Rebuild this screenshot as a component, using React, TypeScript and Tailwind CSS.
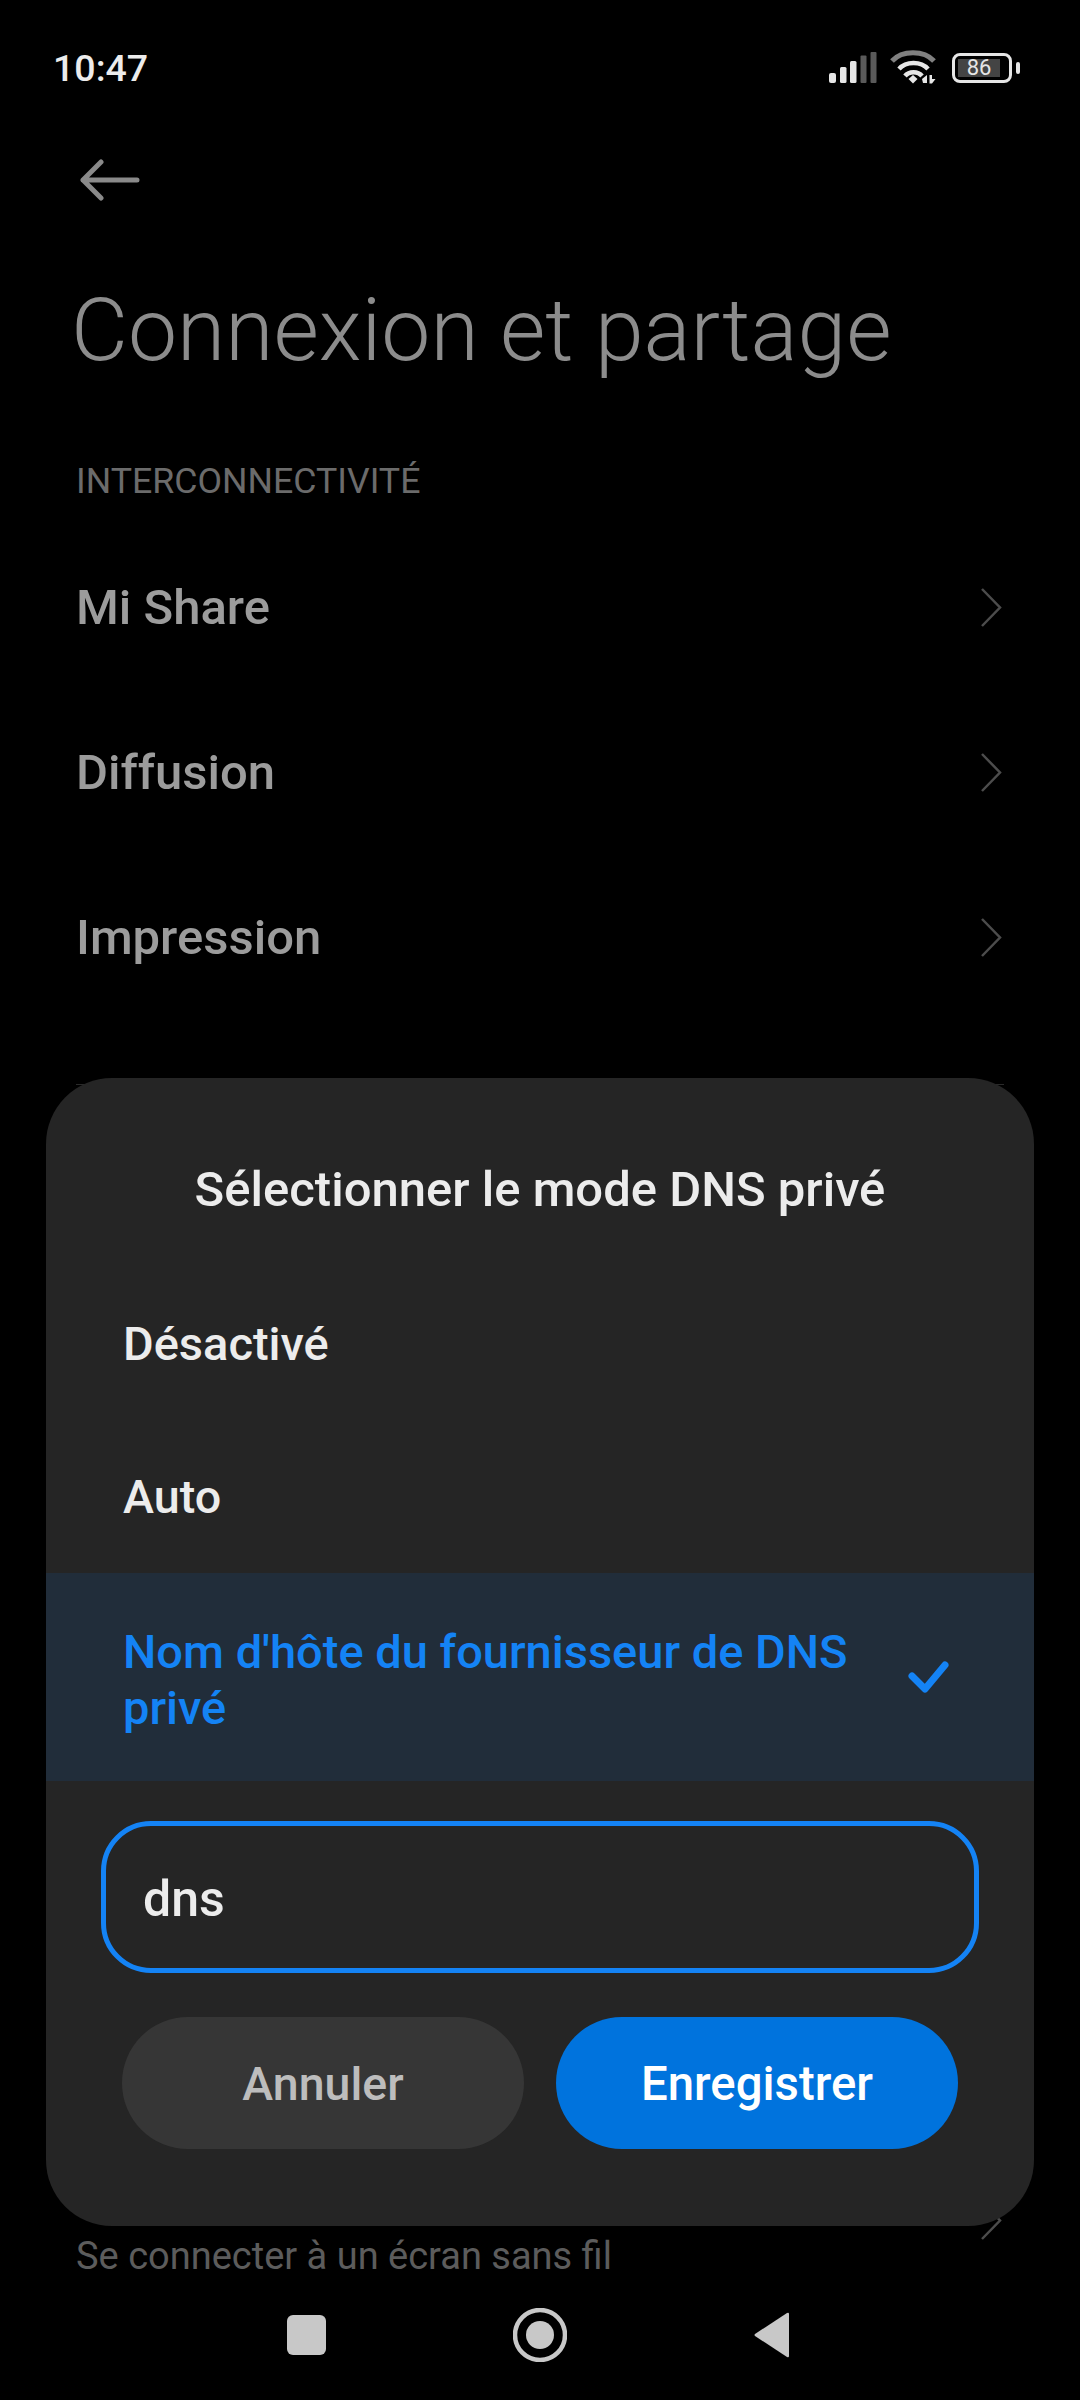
const font = "font-['Roboto',sans-serif]";

function SignalIcon() {
  return (
    <svg width="50" height="32" viewBox="0 0 50 32">
      <rect x="0" y="21" width="7" height="10" rx="2" fill="#e6e6e6" />
      <rect x="11" y="15" width="6.5" height="16" rx="1.5" fill="#e6e6e6" />
      <rect x="21" y="9" width="6.5" height="22" rx="1.5" fill="#e6e6e6" />
      <rect x="31.5" y="3.5" width="6" height="27.5" rx="1" fill="#5a5a5a" />
      <rect x="41.5" y="0" width="6" height="31" rx="1" fill="#5a5a5a" />
    </svg>
  );
}

function WifiIcon() {
  return (
    <svg width="48" height="36" viewBox="0 0 48 36" fill="none">
      <path d="M2 11 C12 0 34 0 44 11" stroke="#808080" strokeWidth="5" />
      <path d="M9 19 C16 11 31 11 38 19" stroke="#e6e6e6" strokeWidth="4.5" />
      <path d="M15 26 C19 21 28 21 32 26" stroke="#e6e6e6" strokeWidth="4.5" />
      <path d="M18.5 29 L23 25 L27.5 29 L23 33.5 Z" fill="#e6e6e6" />
      <path d="M32 29 L37 25 V33 H33 Z M39.5 25 H42 V29 H45.5 L42 33.5 H39.5 Z" fill="#e6e6e6" />
    </svg>
  );
}

function Battery() {
  return (
    <div className="flex items-center gap-[4px]">
      <div className="w-[60px] h-[30px] rounded-[8px] border-[3px] border-[#e6e6e6] p-[3px] flex">
        <div className={`w-[42px] h-full bg-[#444444] flex items-center justify-center text-[22px] leading-none text-[#e6e6e6] ${font}`}>
          86
        </div>
      </div>
      <div className="w-[4px] h-[12px] rounded-[2px] bg-[#e6e6e6]" />
    </div>
  );
}

function Chevron() {
  return (
    <svg width="22" height="42" viewBox="0 0 22 42" fill="none">
      <path d="M1 2 L19 20.5 L1 39" stroke="#4c4c4c" strokeWidth="2.5" />
    </svg>
  );
}

function SettingRow({ label }: { label: string }) {
  return (
    <div className="h-[165px] pl-[76px] pr-[77px] flex items-center justify-between">
      <span className="text-[49px] font-medium text-[#9c9c9c]">{label}</span>
      <Chevron />
    </div>
  );
}

function DnsDialog() {
  return (
    <div className="absolute left-[46px] top-[1078px] w-[988px] h-[1148px] rounded-[66px] bg-[#252525] flex flex-col">
      <div className="h-[200px] pt-[78px] text-center text-[49px] leading-[68px] font-medium text-[#ececec]">
        Sélectionner le mode DNS privé
      </div>
      <div className="h-[132px] pl-[77px] flex items-center text-[47px] font-medium text-[#ececec]">Désactivé</div>
      <div className="h-[163px] pt-[12px] pl-[77px] flex items-center text-[46.7px] font-medium text-[#ececec]">Auto</div>
      <div className="h-[208px] pl-[77px] pr-[85px] bg-[#212d3a] flex items-center justify-between">
        <span className="w-[760px] pt-[5px] text-[47px] leading-[56px] font-medium text-[#1483f5]">
          Nom d'hôte du fournisseur de DNS privé
        </span>
        <svg width="42" height="34" viewBox="0 0 42 34" fill="none">
          <path d="M5 16 L18 29 L38 5" stroke="#1483f5" strokeWidth="7" strokeLinecap="round" strokeLinejoin="round" />
        </svg>
      </div>
      <div className="mt-[40px] mx-[55px] h-[152px] rounded-[50px] border-[5px] border-[#1483f5] pl-[37px] pt-[4px] flex items-center text-[50px] font-medium text-[#ececec]">
        dns
      </div>
      <div className="mt-[44px] mx-[76px] flex gap-[32px]">
        <div className="flex-1 h-[132px] pt-[4px] rounded-[66px] bg-[#363636] flex items-center justify-center text-[46.5px] font-medium text-[#bdbdbd]">
          Annuler
        </div>
        <div className="flex-1 h-[132px] pt-[3px] rounded-[66px] bg-[#0073dd] flex items-center justify-center text-[47.3px] font-medium text-white">
          Enregistrer
        </div>
      </div>
    </div>
  );
}

export default function App() {
  return (
    <div className={`relative w-[1080px] h-[2400px] bg-black overflow-hidden flex flex-col ${font}`}>
      {/* Status bar */}
      <div className="h-[134px] pl-[53px] pr-[60px] pt-[2px] flex items-center justify-between">
        <span className="text-[37.5px] font-medium text-[#ececec]">10:47</span>
        <div className="flex items-center">
          <SignalIcon />
          <div className="ml-[11px] mr-[14px] flex">
            <WifiIcon />
          </div>
          <Battery />
        </div>
      </div>

      {/* Back arrow */}
      <div className="pl-[80px] h-[92px] flex items-center">
        <svg width="60" height="42" viewBox="0 0 60 42" fill="none">
          <path d="M21 3 L3 21 L21 39 M3 21 H57" stroke="#8a8a8a" strokeWidth="5" strokeLinecap="round" strokeLinejoin="round" />
        </svg>
      </div>

      <div className="mt-[54px] pl-[71px] text-[87.7px] leading-[100px] font-light text-[#8c8c8c]">Connexion et partage</div>

      <div className="mt-[80px] pl-[76px] text-[35.7px] leading-[42px] text-[#6b6b6b]">INTERCONNECTIVITÉ</div>

      <div className="mt-[23px]">
        <SettingRow label="Mi Share" />
        <SettingRow label="Diffusion" />
        <SettingRow label="Impression" />
      </div>

      <div className="mt-auto">
        <div className="relative pl-[76px] pr-[77px] text-[38px] leading-[44px] text-[#5c5c5c]">
          Se connecter à un écran sans fil
          <div className="absolute right-[77px] -top-[34px]">
            <Chevron />
          </div>
        </div>
        {/* Navigation bar */}
        <div className="h-[122px] pb-[8px] flex items-center justify-center gap-[187px] pr-[4px]">
          <div className="w-[39px] h-[40px] rounded-[6px] bg-[#c8c8c8]" />
          <svg width="54" height="54" viewBox="0 0 54 54" fill="none">
            <circle cx="27" cy="27" r="25" stroke="#c8c8c8" strokeWidth="4.5" />
            <circle cx="27" cy="27" r="14" fill="#c8c8c8" />
          </svg>
          <svg width="36" height="46" viewBox="0 0 36 46">
            <path d="M35 2 V44 Q35 46 33 45 L1 24 Q0 23 1 22 L33 1 Q35 0 35 2 Z" fill="#c8c8c8" />
          </svg>
        </div>
      </div>

      {/* Edge of the sheet behind the dialog, only its ends show past the corners */}
      <div className="absolute left-[76px] right-[76px] top-[1084px] h-[1px] bg-[#2a2a2a]" />

      <DnsDialog />
    </div>
  );
}
